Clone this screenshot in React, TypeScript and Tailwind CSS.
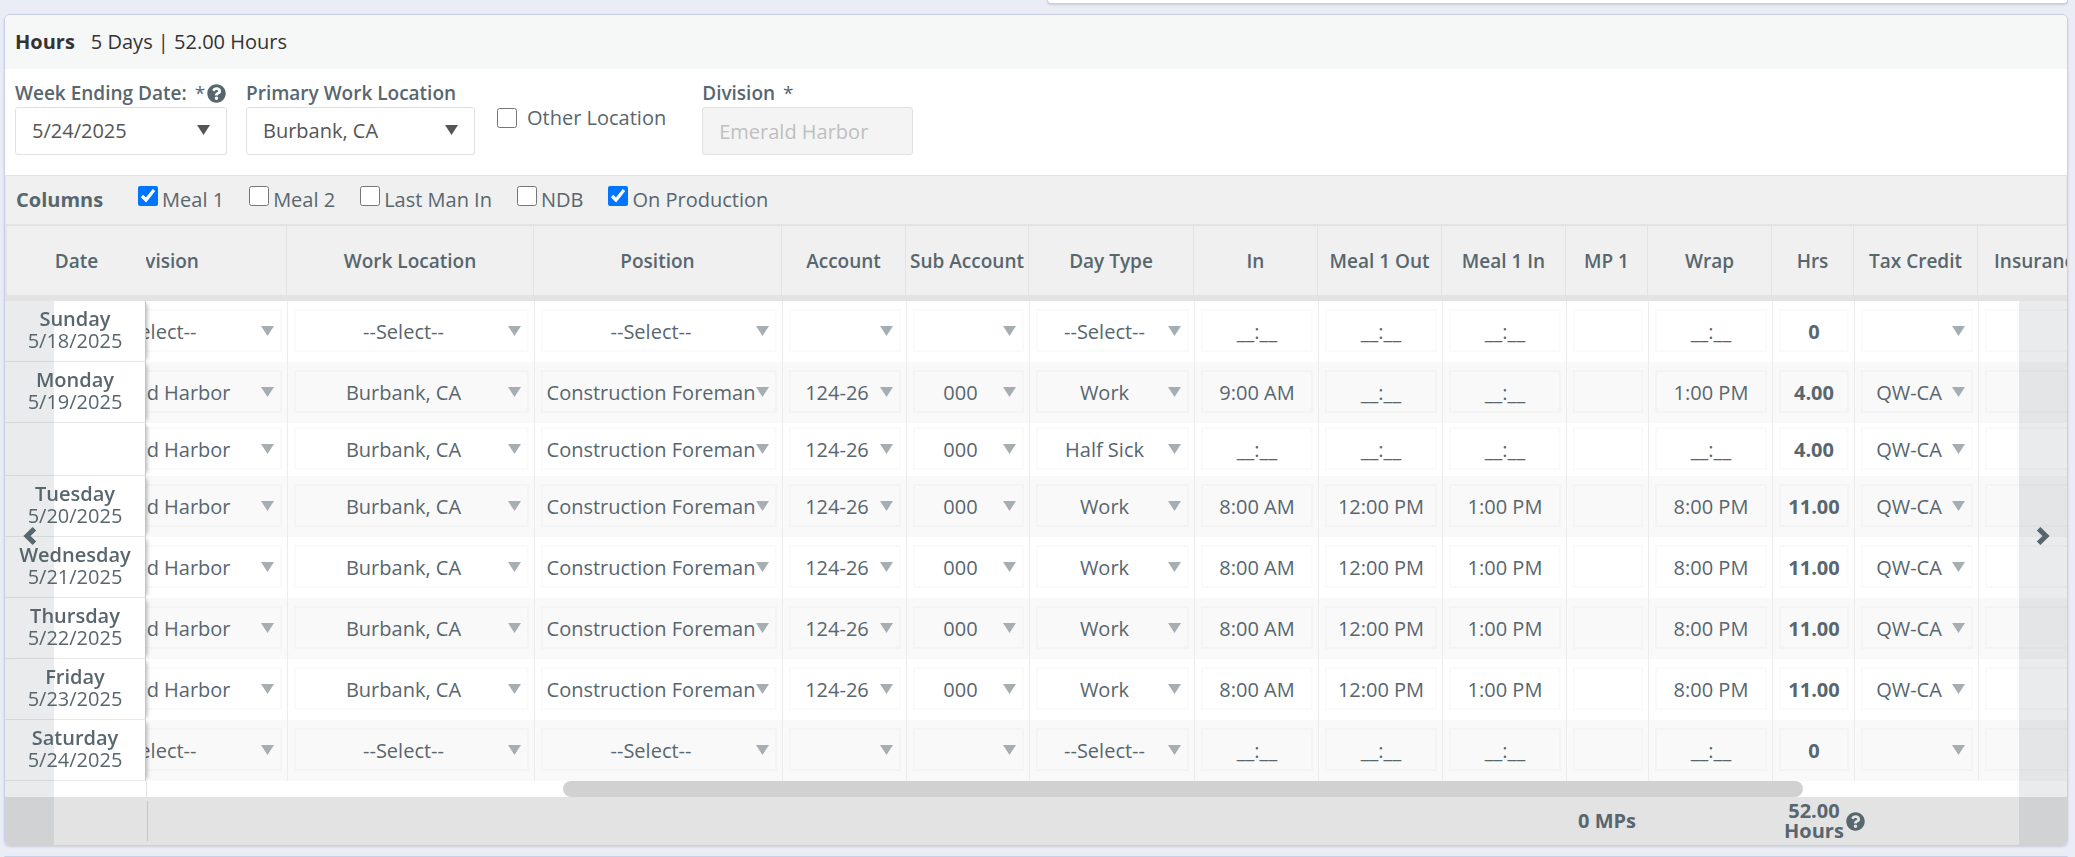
import { useLayoutEffect, useRef, useState } from "react";
import { FaQuestionCircle } from "react-icons/fa";

const SCROLL_LEFT = 107;

const columns = [
  { key: "division", label: "Division", kind: "select", width: "w-[248px]" },
  { key: "location", label: "Work Location", kind: "select", width: "w-[247px]" },
  { key: "position", label: "Position", kind: "select", width: "w-[248px]" },
  { key: "account", label: "Account", kind: "select", width: "w-[124px]" },
  { key: "subAccount", label: "Sub Account", kind: "select", width: "w-[123px]" },
  { key: "dayType", label: "Day Type", kind: "select", width: "w-[165px]" },
  { key: "in", label: "In", kind: "time", width: "w-[124px]" },
  { key: "mealOut", label: "Meal 1 Out", kind: "time", width: "w-[124px]" },
  { key: "mealIn", label: "Meal 1 In", kind: "time", width: "w-[124px]" },
  { key: "mp", label: "MP 1", kind: "text", width: "w-[82px]" },
  { key: "wrap", label: "Wrap", kind: "time", width: "w-[124px]" },
  { key: "hrs", label: "Hrs", kind: "total", width: "w-[82px]" },
  { key: "taxCredit", label: "Tax Credit", kind: "select", width: "w-[124px]" },
  { key: "insurance", label: "Insurance", kind: "text", width: "w-[124px]" },
];

type Day = { day: string; date: string; values: Record<string, string> };

const blank = "__:__";

const emptyDay = {
  division: "--Select--",
  location: "--Select--",
  position: "--Select--",
  dayType: "--Select--",
  in: blank,
  mealOut: blank,
  mealIn: blank,
  wrap: blank,
  hrs: "0",
};

const workDay = {
  division: "Emerald Harbor",
  location: "Burbank, CA",
  position: "Construction Foreman",
  account: "124-26",
  subAccount: "000",
  dayType: "Work",
  in: "8:00 AM",
  mealOut: "12:00 PM",
  mealIn: "1:00 PM",
  wrap: "8:00 PM",
  hrs: "11.00",
  taxCredit: "QW-CA",
};

const days: Day[] = [
  { day: "Sunday", date: "5/18/2025", values: emptyDay },
  {
    day: "Monday",
    date: "5/19/2025",
    values: { ...workDay, in: "9:00 AM", mealOut: blank, mealIn: blank, wrap: "1:00 PM", hrs: "4.00" },
  },
  {
    day: "",
    date: "",
    values: { ...workDay, dayType: "Half Sick", in: blank, mealOut: blank, mealIn: blank, wrap: blank, hrs: "4.00" },
  },
  { day: "Tuesday", date: "5/20/2025", values: workDay },
  { day: "Wednesday", date: "5/21/2025", values: workDay },
  { day: "Thursday", date: "5/22/2025", values: workDay },
  { day: "Friday", date: "5/23/2025", values: workDay },
  { day: "Saturday", date: "5/24/2025", values: emptyDay },
];

const columnToggles = [
  { label: "Meal 1", on: true },
  { label: "Meal 2", on: false },
  { label: "Last Man In", on: false },
  { label: "NDB", on: false },
  { label: "On Production", on: true },
];

function Caret({ className }: { className: string }) {
  return (
    <svg viewBox="0 0 13 10" className={`pointer-events-none absolute h-2.5 w-[13px] ${className}`}>
      <path d="M0 0h13L6.5 10z" fill="currentColor" />
    </svg>
  );
}

function Chevron({ className = "" }: { className?: string }) {
  return (
    <svg viewBox="0 0 14 18" className={`h-[18px] w-3.5 ${className}`}>
      <path d="M9.6 0 13.2 3.4 7.6 9l5.6 5.6L9.6 18 0.4 9z" fill="currentColor" />
    </svg>
  );
}

function FilterSelect({ id, value, width }: { id: string; value: string; width: string }) {
  return (
    <div className={`relative ${width}`}>
      <select
        id={id}
        className="h-12 w-full appearance-none rounded-[3px] border border-[#e0e0e0] bg-white px-4 text-[#555]"
      >
        <option>{value}</option>
      </select>
      <Caret className="top-[18px] right-[17px] text-[#555]" />
    </div>
  );
}

function Cell({ kind, label, value }: { kind: string; label: string; value: string }) {
  if (kind === "select") {
    return (
      <div className="relative">
        <select
          aria-label={label}
          defaultValue={value}
          className="block h-[43px] w-full appearance-none border-2 border-black/[0.02] bg-transparent pt-0.5 pr-4 text-center [text-align-last:center]"
        >
          <option value={value}>{value}</option>
        </select>
        <Caret className="top-[17px] right-2 text-[#a6aeb2]" />
      </div>
    );
  }
  return (
    <input
      type="text"
      aria-label={label}
      defaultValue={value}
      readOnly={kind === "total"}
      className={`block h-[43px] w-full border-2 border-black/[0.02] bg-transparent pt-0.5 text-center ${
        kind === "total" ? "font-bold" : ""
      }`}
    />
  );
}

function Columns() {
  return (
    <colgroup>
      <col className="w-[141px]" />
      {columns.map((c) => (
        <col key={c.key} className={c.width} />
      ))}
    </colgroup>
  );
}

export default function App() {
  const [toggles, setToggles] = useState(columnToggles);
  const [thumb, setThumb] = useState({ left: 22, width: 65 });
  const bodyRef = useRef<HTMLDivElement>(null);
  const footRef = useRef<HTMLDivElement>(null);

  const scrollTo = (left: number) => {
    if (!bodyRef.current || !footRef.current) return;
    bodyRef.current.scrollLeft = left;
    footRef.current.scrollLeft = left;
    const view = bodyRef.current.clientWidth - 141;
    const total = view + 1053;
    setThumb({ left: ((left + 537) / total) * 100, width: (view / total) * 100 });
  };

  useLayoutEffect(() => scrollTo(SCROLL_LEFT), []);

  return (
    <div className="bg-[#eaedf6] pr-[7px] pl-1 font-['Open_Sans','Noto_Sans',sans-serif] text-xl text-[#58666e]">
      <div className="grid grid-cols-2 gap-[22px]">
        <div className="col-start-2 h-1 rounded-b-md border border-t-0 border-[#c6cee0] bg-white shadow-sm" />
      </div>

      <section className="mt-2.5 overflow-hidden rounded-md border border-[#c8d1e5] bg-white shadow-sm">
        <header className="flex h-[54px] items-center gap-4 bg-[#f6f8f7] px-2.5 text-[#333]">
          <h2 className="font-bold">Hours</h2>
          <span>5 Days | 52.00 Hours</span>
        </header>

        {/* Week filters */}
        <div className="flex h-[106px] items-start px-2.5 pt-2.5">
          <div className="w-[212px] whitespace-nowrap">
            <label htmlFor="week-ending" className="flex h-7 items-center text-[19px] font-semibold">
              Week Ending Date:
              <span className="ml-2 font-normal">*</span>
              <FaQuestionCircle className="ml-0.5 size-[19px] shrink-0" />
            </label>
            <FilterSelect id="week-ending" value="5/24/2025" width="w-[212px]" />
          </div>
          <div className="ml-[19px]">
            <label htmlFor="primary-location" className="flex h-7 items-center text-[19px] font-semibold">
              Primary Work Location
            </label>
            <FilterSelect id="primary-location" value="Burbank, CA" width="w-[229px]" />
          </div>
          <label className="mt-[25px] ml-[22px] flex items-center gap-2.5">
            <input type="checkbox" className="size-5" />
            Other Location
          </label>
          <div className="ml-9">
            <label htmlFor="division" className="flex h-7 items-center text-[19px] font-semibold">
              Division
              <span className="ml-2 font-normal">*</span>
            </label>
            <input
              id="division"
              type="text"
              disabled
              defaultValue="Emerald Harbor"
              className="block h-12 w-[211px] rounded-[3px] border border-[#e0e0e0] bg-[#f4f4f4] px-4 text-[#bfbfbf]"
            />
          </div>
        </div>

        {/* Column toggles */}
        <div className="flex h-[51px] items-center gap-[25px] border-x border-t border-b-2 border-[#e3e3e3] bg-[#f0f0f0] px-2.5">
          <span className="mr-2.5 font-bold">Columns</span>
          {toggles.map((t) => (
            <label key={t.label} className="flex items-center gap-1">
              <input
                type="checkbox"
                checked={t.on}
                onChange={() => setToggles(toggles.map((o) => (o === t ? { ...o, on: !o.on } : o)))}
                className="mb-2 size-5"
              />
              {t.label}
            </label>
          ))}
        </div>

        <div className="relative">
          <div ref={bodyRef} className="overflow-x-auto [scrollbar-width:none]">
            <table className="w-[2204px] table-fixed border-separate border-spacing-0">
              <Columns />
              <thead className="text-[19px]">
                <tr className="h-[75px]">
                  <th className="sticky left-0 z-30 border-b-[6px] border-l-2 border-[#e3e3e3] bg-[#f0f0f0] p-0 pt-0.5 font-semibold">
                    Date
                  </th>
                  {columns.map((c) => (
                    <th
                      key={c.key}
                      className="relative z-20 border-r border-b-[6px] border-[#e3e3e3] bg-[#f0f0f0] p-0 pt-0.5 font-semibold whitespace-nowrap"
                    >
                      {c.label}
                    </th>
                  ))}
                </tr>
              </thead>
              <tbody>
                {days.map((d, i) => (
                  <tr key={i} className={`${d.day ? "h-[61px]" : "h-[53px]"} ${i % 2 ? "bg-[#f9f9f9]" : "bg-white"}`}>
                    <th className="sticky left-0 z-[5] border-r border-b border-r-[#c4c4c4] border-b-[#ebebeb] bg-white p-0 pb-0.5 text-center leading-[22px] font-normal shadow-[4px_0_4px_-3px_rgba(0,0,0,0.3)]">
                      <div className="font-semibold">{d.day}</div>
                      <div>{d.date}</div>
                    </th>
                    {columns.map((c) => (
                      <td key={c.key} className="border-l border-[#ececec] p-0 pr-[5px] pb-0.5 pl-1.5">
                        <Cell kind={c.kind} label={`${c.label} ${d.date}`} value={d.values[c.key] ?? ""} />
                      </td>
                    ))}
                  </tr>
                ))}
              </tbody>
            </table>
          </div>

          <div className="flex h-4 bg-white">
            <div className="w-[142px] border-r border-[#e3e3e3]" />
            <div className="flex-1">
              <div
                className="h-4 rounded-full bg-[#d1d1d1]"
                style={{ marginLeft: `${thumb.left}%`, width: `${thumb.width}%` }}
              />
            </div>
          </div>

          <div ref={footRef} className="overflow-hidden bg-[#e3e3e3]">
            <table className="w-[2204px] table-fixed border-separate border-spacing-0 font-bold">
              <Columns />
              <tbody>
                <tr className="h-12">
                  <td className="sticky left-0 bg-[#e3e3e3] p-0 py-1">
                    <div className="-mr-0.5 h-10 border-r border-[#c4c4c4]" />
                  </td>
                  <td colSpan={9} />
                  <td className="p-0 text-center whitespace-nowrap">0 MPs</td>
                  <td />
                  <td colSpan={2} className="p-0">
                    <div className="flex items-center gap-0.5 pl-3">
                      <div className="text-center leading-5">
                        52.00
                        <br />
                        Hours
                      </div>
                      <FaQuestionCircle className="size-[19px]" />
                    </div>
                  </td>
                  <td />
                </tr>
              </tbody>
            </table>
          </div>

          <button
            type="button"
            aria-label="Scroll left"
            onClick={() => scrollTo(0)}
            className="absolute inset-y-0 left-0 z-10 flex w-[49px] items-center justify-center bg-[#58666e]/13"
          >
            <Chevron />
          </button>
          <button
            type="button"
            aria-label="Scroll right"
            onClick={() => scrollTo(142)}
            className="absolute inset-y-0 right-0 z-10 flex w-12 items-center justify-center bg-[#58666e]/13"
          >
            <Chevron className="rotate-180" />
          </button>
        </div>
      </section>

      <div className="mt-2.5 h-px rounded-t-md bg-[#c8d1e5]" />
    </div>
  );
}
